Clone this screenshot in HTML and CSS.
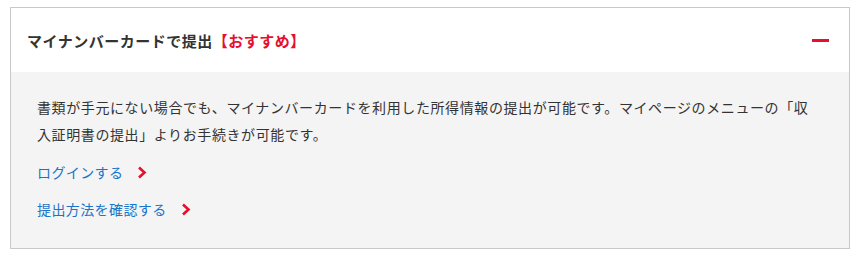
FILE: index.html
```html
<!DOCTYPE html>
<html lang="ja">
<head>
    <meta charset="UTF-8">
    <title>マイナンバーカードで提出</title>
    <meta name="viewport" content="width=device-width, initial-scale=1.0">
    <link rel="stylesheet" href="styles.css">
</head>
<body>
    <div class="accordion">
        <div class="accordion-head">
            <h2 class="accordion-title">マイナンバーカードで提出<span class="recommend">【おすすめ】</span></h2>
            <span class="toggle"></span>
        </div>
        <div class="accordion-body">
            <p>書類が手元にない場合でも、マイナンバーカードを利用した所得情報の提出が可能です。マイページのメニューの「収入証明書の提出」よりお手続きが可能です。</p>
            <ul class="links">
                <li><a href="#">ログインする<svg class="chevron" width="10" height="13" viewBox="0 0 10 13"><polyline points="2,1.5 7.5,6.5 2,11.5" fill="none" stroke="#e60f2d" stroke-width="2.6"/></svg></a></li>
                <li><a href="#">提出方法を確認する<svg class="chevron" width="10" height="13" viewBox="0 0 10 13"><polyline points="2,1.5 7.5,6.5 2,11.5" fill="none" stroke="#e60f2d" stroke-width="2.6"/></svg></a></li>
            </ul>
        </div>
    </div>
</body>
</html>
```

FILE: styles.css
```css
body {
    margin: 0;
    padding: 0;
    background: #fff;
    color: #333;
    font-family: "Noto Sans CJK JP", "Noto Sans", sans-serif;
}
.accordion {
    margin: 7px 10px 9px;
    border: 1px solid #c8c8c8;
}
.accordion-head {
    display: flex;
    align-items: center;
    justify-content: space-between;
    height: 64px;
    padding: 0 20px 0 16px;
    background: #fff;
}
.accordion-title {
    margin: 0;
    font-size: 15px;
    font-weight: bold;
    letter-spacing: 0.5px;
    line-height: 1;
    color: #333;
}
.recommend {
    color: #e60f2d;
}
.toggle {
    width: 17px;
    height: 3px;
    background: #e60f2d;
}
.accordion-body {
    background: #f4f4f4;
    padding: 22px 26px 25px;
}
.accordion-body p {
    margin: 0;
    font-size: 14px;
    line-height: 27px;
    letter-spacing: 0.6px;
}
.links {
    list-style: none;
    margin: 10px 0 0;
    padding: 0;
    display: flex;
    flex-direction: column;
    gap: 9px;
}
.links li {
    line-height: 27px;
}
.links a {
    display: inline-flex;
    align-items: center;
    font-size: 14px;
    letter-spacing: 0.4px;
    color: #1a75c9;
    text-decoration: none;
}
.chevron {
    margin-left: 14px;
}
```
